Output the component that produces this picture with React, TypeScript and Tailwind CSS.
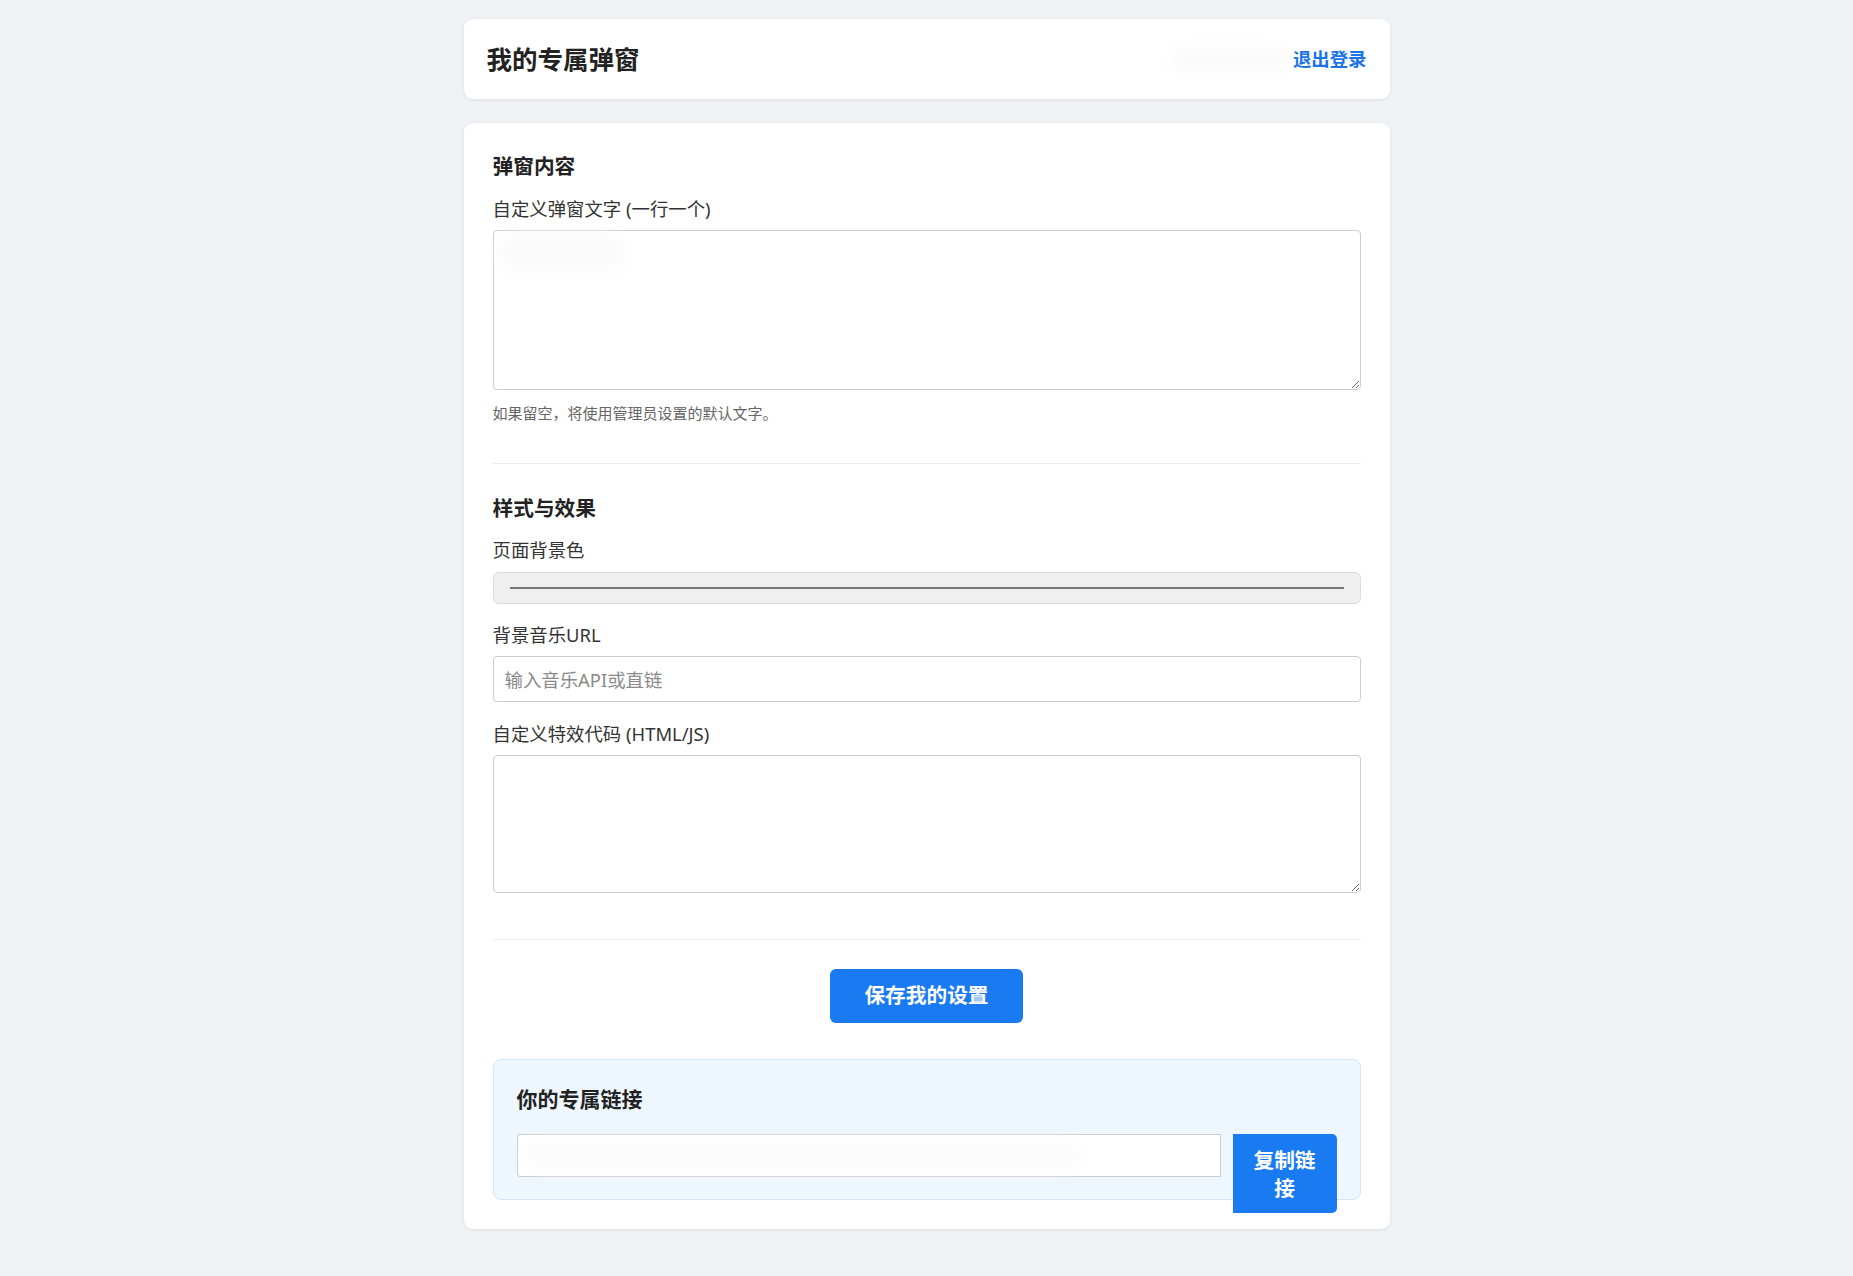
import React from 'react'

const font = { fontFamily: '"Noto Sans", "Noto Sans CJK SC", sans-serif' }

function Label({ children, className = '' }: { children: React.ReactNode; className?: string }) {
  return (
    <label className={`block text-[18.4px] leading-[26px] text-[#333] ${className}`}>{children}</label>
  )
}

function SectionTitle({ children, className = '' }: { children: React.ReactNode; className?: string }) {
  return <h2 className={`text-[20.7px] font-bold leading-[28px] text-[#222] ${className}`}>{children}</h2>
}

export default function App() {
  return (
    <div className="min-h-[1276px] bg-[#f0f2f5] pt-[19px] pb-[40px]" style={font}>
      {/* 顶部栏 */}
      <header className="mx-auto flex h-[80px] w-[926px] items-center justify-between rounded-[9px] bg-white px-[23px] shadow-[0_1px_4px_rgba(0,0,0,0.08)]">
        <h1 className="text-[25.5px] font-bold leading-[34px] text-[#222]">我的专属弹窗</h1>
        <div className="flex items-center gap-[6px]">
          <div className="h-[28px] w-[117px] rounded-full bg-[#fbfbfb] blur-[6px]" />
          <a className="cursor-pointer text-[18.4px] font-bold leading-[26px] text-[#1a73e8]">退出登录</a>
        </div>
      </header>

      {/* 设置面板 */}
      <main className="mx-auto mt-[24px] w-[926px] rounded-[9px] bg-white p-[29px] shadow-[0_1px_4px_rgba(0,0,0,0.08)]">
        <SectionTitle>弹窗内容</SectionTitle>
        <Label className="mt-[16px]">自定义弹窗文字 (一行一个)</Label>
        <div className="relative mt-[8px]">
          <textarea className="block h-[160px] w-full rounded-[4px] border border-[#ccc] bg-white px-[12px] py-[10px] text-[18.4px] outline-none" />
          <div className="pointer-events-none absolute left-[4px] top-[4px] h-[36px] w-[130px] rounded-full bg-[#fbfbfb] blur-[6px]" />
        </div>
        <p className="mt-[13px] text-[15px] leading-[21px] text-[#666]">如果留空，将使用管理员设置的默认文字。</p>

        <hr className="mt-[39px] border-0 border-t border-[#eee]" />

        <SectionTitle className="mt-[30px]">样式与效果</SectionTitle>
        <Label className="mt-[15px]">页面背景色</Label>
        <div className="mt-[9px] flex h-[32px] items-center rounded-[6px] border border-[#ddd] bg-[#efefef] px-[16px]">
          <div className="h-[2px] w-full bg-[#777]" />
        </div>

        <Label className="mt-[18px]">背景音乐URL</Label>
        <input
          className="mt-[8px] block h-[46px] w-full rounded-[4px] border border-[#ccc] bg-white px-[11px] text-[18.4px] text-[#333] outline-none placeholder:text-[#8a8a8a]"
          placeholder="输入音乐API或直链"
        />

        <Label className="mt-[19px]">自定义特效代码 (HTML/JS)</Label>
        <textarea className="mt-[8px] block h-[138px] w-full rounded-[4px] border border-[#ccc] bg-white px-[12px] py-[10px] text-[18.4px] outline-none" />

        <hr className="mt-[46px] border-0 border-t border-[#eee]" />

        <div className="mt-[29px] flex justify-center">
          <button className="h-[54px] w-[193px] rounded-[6px] bg-[#1a7af2] text-[20.7px] font-bold text-white">
            保存我的设置
          </button>
        </div>

        {/* 专属链接 */}
        <section className="mt-[36px] rounded-[8px] border border-[#d3e6fa] bg-[#eef6fe] px-[23px] pt-[25px] pb-[22px]">
          <h3 className="text-[21px] font-bold leading-[28px] text-[#222]">你的专属链接</h3>
          <div className="mt-[21px] flex h-[43px] items-start gap-[12px]">
            <div className="relative h-[43px] flex-1">
              <input
                readOnly
                className="block h-[43px] w-full rounded-l-[3px] border border-[#ccc] bg-white px-[11px] text-[17px] outline-none"
              />
              <div className="pointer-events-none absolute left-[6px] top-[5px] h-[32px] w-[560px] rounded-full bg-[#fcfcfc] blur-[6px]" />
            </div>
            <button className="flex h-[79px] w-[104px] shrink-0 items-center justify-center rounded-r-[5px] bg-[#1a7af2] px-[20px] text-center text-[20.7px] font-bold leading-[28px] text-white">
              复制链接
            </button>
          </div>
        </section>
      </main>
    </div>
  )
}
